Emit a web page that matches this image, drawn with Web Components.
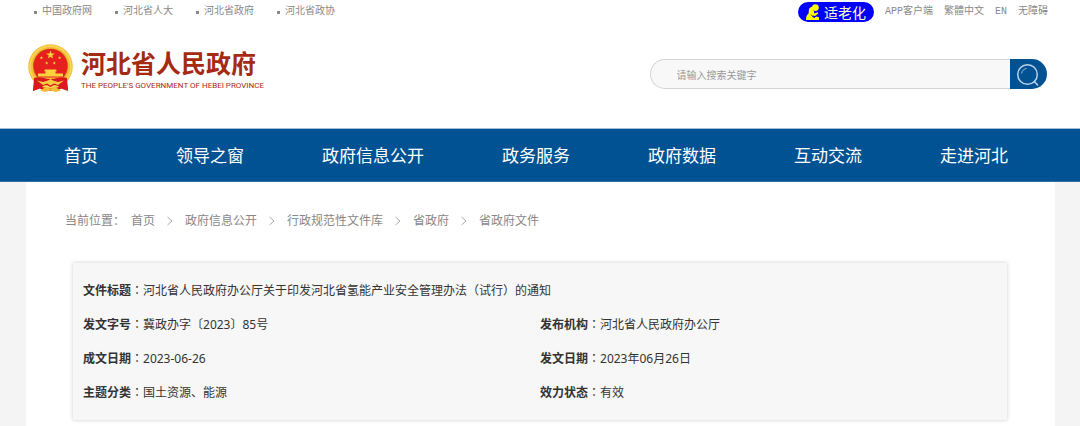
<!DOCTYPE html>
<html lang="zh-CN">
<head>
<meta charset="utf-8">
<meta name="viewport" content="width=device-width, initial-scale=1">
<title>河北省人民政府</title>
<style>
    body {
        margin: 0;
        min-height: 100vh;
        display: flex;
        flex-direction: column;
        background: #f4f4f4;
        color: #333;
        font-family: "Noto Sans", "Noto Sans CJK SC", sans-serif;
        font-size: 12px;
    }
</style>
</head>
<body>
<site-header>
    <top-link slot="links" href="#">中国政府网</top-link>
    <top-link slot="links" href="#">河北省人大</top-link>
    <top-link slot="links" href="#">河北省政府</top-link>
    <top-link slot="links" href="#">河北省政协</top-link>
    <elder-button slot="tools">适老化</elder-button>
    <top-link slot="tools" plain href="#">APP客户端</top-link>
    <top-link slot="tools" plain href="#">繁體中文</top-link>
    <top-link slot="tools" plain href="#">EN</top-link>
    <top-link slot="tools" plain href="#">无障碍</top-link>
    <site-logo slot="logo"></site-logo>
    <search-box slot="search" placeholder="请输入搜索关键字"></search-box>
</site-header>
<main-nav>
    <nav-item href="#">首页</nav-item>
    <nav-item href="#">领导之窗</nav-item>
    <nav-item href="#">政府信息公开</nav-item>
    <nav-item href="#">政务服务</nav-item>
    <nav-item href="#">政府数据</nav-item>
    <nav-item href="#">互动交流</nav-item>
    <nav-item href="#">走进河北</nav-item>
</main-nav>
<page-content>
    <bread-crumb>
        <span slot="label">当前位置：</span>
        <crumb-item href="#">首页</crumb-item>
        <crumb-item href="#">政府信息公开</crumb-item>
        <crumb-item href="#">行政规范性文件库</crumb-item>
        <crumb-item href="#">省政府</crumb-item>
        <crumb-item href="#" last>省政府文件</crumb-item>
    </bread-crumb>
    <doc-info>
        <doc-field wide label="文件标题">河北省人民政府办公厅关于印发河北省氢能产业安全管理办法（试行）的通知</doc-field>
        <doc-field label="发文字号">冀政办字〔2023〕85号</doc-field>
        <doc-field label="发布机构">河北省人民政府办公厅</doc-field>
        <doc-field label="成文日期">2023-06-26</doc-field>
        <doc-field label="发文日期">2023年06月26日</doc-field>
        <doc-field label="主题分类">国土资源、能源</doc-field>
        <doc-field label="效力状态">有效</doc-field>
    </doc-info>
</page-content>

<script>
// shared base: every element renders its markup once into an open shadow root
class BaseElement extends HTMLElement {
    constructor() {
        super();
        this.attachShadow({ mode: "open" });
        this.shadowRoot.innerHTML = this.render();
    }
}

class SiteHeader extends BaseElement {
    render() {
        return `
            <style>
                :host { display: block; background: #fff; }
                .top {
                    display: flex;
                    justify-content: space-between;
                    height: 24px;
                    padding: 0 32px 0 34px;
                }
                .links, .tools { display: flex; align-items: center; }
                .links { gap: 23px; }
                .tools { gap: 11px; }
                .main {
                    display: flex;
                    justify-content: space-between;
                    align-items: center;
                    height: 104px;
                    padding: 0 33px 16px 28px;
                    box-sizing: border-box;
                }
            </style>
            <header>
                <div class="top">
                    <div class="links"><slot name="links"></slot></div>
                    <div class="tools"><slot name="tools"></slot></div>
                </div>
                <div class="main">
                    <slot name="logo"></slot>
                    <slot name="search"></slot>
                </div>
            </header>
        `;
    }
}

class TopLink extends BaseElement {
    render() {
        return `
            <style>
                :host { display: block; line-height: 20px; font-size: 10px; }
                a {
                    display: flex;
                    align-items: center;
                    gap: 5px;
                    color: #888;
                    text-decoration: none;
                    white-space: nowrap;
                    font-family: "Liberation Mono", "Noto Sans CJK SC", monospace;
                }
                a::before { content: ""; width: 3px; height: 3px; background: #888; }
                :host([plain]) a::before { display: none; }
            </style>
            <a><slot></slot></a>
        `;
    }

    connectedCallback() {
        this.shadowRoot.querySelector("a").href = this.getAttribute("href");
    }
}

class ElderButton extends BaseElement {
    render() {
        return `
            <style>
                :host { display: block; }
                button {
                    display: flex;
                    align-items: center;
                    gap: 4px;
                    height: 20px;
                    padding: 0 8px;
                    border: 0;
                    border-radius: 10px;
                    background: #00f;
                    color: #ffffc8;
                    font: 14px/20px "Noto Sans CJK SC", sans-serif;
                    white-space: nowrap;
                }
                svg { display: block; }
            </style>
            <button type="button">
                <svg width="14" height="16" viewBox="0 0 14 16" fill="#ff0" aria-hidden="true">
                    <circle cx="9.4" cy="3.6" r="3.4"/>
                    <path d="M6.2 2.4C4 3 2.8 4.6 2.8 6.8L2.6 9.4C.8 10.8 0 12.6 0 16H13V13.2L10 12.4 8.6 14 6.4 12.6 7 11.4 9 12 12.4 9.6 11.6 8.2 8.4 9.6 7.6 6.4Z"/>
                    <path d="M5.2 10.6 6.6 12.6 9 13.2" fill="none" stroke="#00f" stroke-width=".8"/>
                </svg>
                <slot></slot>
            </button>
        `;
    }
}

class SiteLogo extends BaseElement {
    render() {
        return `
            <style>
                :host { display: block; }
                a {
                    display: flex;
                    align-items: center;
                    gap: 8px;
                    color: #a52a12;
                    text-decoration: none;
                    white-space: nowrap;
                }
                svg { display: block; }
                .name { display: flex; flex-direction: column; }
                .zh { font: bold 25px/36px "Noto Sans CJK SC", sans-serif; }
                .en { font: 8px/12px Roboto, sans-serif; }
            </style>
            <a href="#">
                <svg width="45" height="49" viewBox="0 0 45 49" aria-hidden="true">
                    <path d="M7 33 38 33 40 46 34 44 29 47H16L11 44 5 47Z" fill="#d3161b"/>
                    <circle cx="22.5" cy="22.5" r="22.3" fill="#f3bd35"/>
                    <circle cx="22.5" cy="22.5" r="20.4" fill="none" stroke="#fbd55a" stroke-width="1.6"/>
                    <circle cx="22.5" cy="22" r="17.6" fill="#c98418"/>
                    <circle cx="22.5" cy="22" r="17" fill="#e6201f"/>
                    <g fill="#fbd33c">
                        <path id="star" d="M22.5 6.5 23.5 9.6H26.8L24.2 11.5 25.2 14.6 22.5 12.7 19.8 14.6 20.8 11.5 18.2 9.6H21.5Z"/>
                        <use href="#star" transform="translate(4.4 9.3) scale(.4)"/>
                        <use href="#star" transform="translate(22.6 9.3) scale(.4)"/>
                        <use href="#star" transform="translate(9.7 14.6) scale(.4)"/>
                        <use href="#star" transform="translate(17.3 14.6) scale(.4)"/>
                        <path d="M17 25.5H28L29 27.3H27.5V29.6H35V32.6H10V29.6H17.5V27.3H16Z"/>
                        <path d="M9 33.5H36L31 38H14Z" fill="#f6c43e"/>
                    </g>
                    <path d="M6 34C12 32 16 35 22.5 35S33 32 39 34L40 47 33 44.5C31 42 28 41 26 41L22.5 43 19 41C17 41 14 42 12 44.5L5 47Z" fill="#d8191d"/>
                    <path d="M9 36.5 15 38 20 36.5 22.5 35 25 36.5 30 38 36 36.5 30 41 26 39.5 22.5 41.5 19 39.5 15 41Z" fill="#f8cd42"/>
                    <path d="M12 46.5 18 43 22.5 45 27 43 33 46.5 28 48 22.5 46.5 17 48Z" fill="#f3bd35"/>
                </svg>
                <span class="name">
                    <span class="zh">河北省人民政府</span>
                    <span class="en">THE PEOPLE'S GOVERNMENT OF HEBEI PROVINCE</span>
                </span>
            </a>
        `;
    }
}

class SearchBox extends BaseElement {
    render() {
        return `
            <style>
                :host { display: block; width: 39%; }
                form { display: flex; height: 30px; margin: 0; padding-top: 12px; }
                input {
                    flex: 1;
                    min-width: 0;
                    padding: 0 26px;
                    border: 1px solid #d4d4d4;
                    border-right: 0;
                    border-radius: 15px 0 0 15px;
                    background: #f8f8f8;
                    color: #333;
                    font: 10px "Noto Sans CJK SC", sans-serif;
                    outline: 0;
                }
                input::placeholder { color: #999; }
                button {
                    width: 37px;
                    padding: 0;
                    border: 0;
                    border-radius: 0 15px 15px 0;
                    background: #005293;
                }
                svg { display: block; margin: 1px 0 0 6px; }
            </style>
            <form role="search">
                <input type="text" aria-label="搜索">
                <button type="button" aria-label="搜索">
                    <svg width="24" height="24" viewBox="0 0 24 24" fill="none" stroke="#b9d2e8" aria-hidden="true">
                        <circle cx="11.5" cy="11.5" r="9.8" stroke-width="1.5"/>
                        <path d="M5.5 10.5C6 7.8 7.8 6 10.5 5.5" stroke-width=".8"/>
                        <path d="M17.5 19.5 18.5 18.5 22 22.5" stroke-width="1.5"/>
                    </svg>
                </button>
            </form>
        `;
    }

    connectedCallback() {
        this.shadowRoot.querySelector("input").placeholder = this.getAttribute("placeholder");
    }
}

class MainNav extends BaseElement {
    render() {
        return `
            <style>
                :host { display: block; background: #005293; }
                nav {
                    display: flex;
                    justify-content: space-between;
                    padding: 0 72px 0 64px;
                    border-top: 1px solid #9fbfd8;
                    border-bottom: 1px solid #2f70a6;
                }
            </style>
            <nav><slot></slot></nav>
        `;
    }
}

class NavItem extends BaseElement {
    render() {
        return `
            <style>
                :host { display: block; }
                a {
                    display: block;
                    color: #fff;
                    font: 17px/52px "Noto Sans CJK SC", sans-serif;
                    text-decoration: none;
                    white-space: nowrap;
                }
            </style>
            <a><slot></slot></a>
        `;
    }

    connectedCallback() {
        this.shadowRoot.querySelector("a").href = this.getAttribute("href");
    }
}

class PageContent extends BaseElement {
    render() {
        return `
            <style>
                :host {
                    display: block;
                    flex: 1;
                    margin: 0 25px 0 26px;
                    padding: 29px 48px 5px 39px;
                    background: #fff;
                }
            </style>
            <main><slot></slot></main>
        `;
    }
}

class BreadCrumb extends BaseElement {
    render() {
        return `
            <style>
                :host { display: block; margin-bottom: 32px; color: #888; line-height: 20px; }
                nav { display: flex; align-items: center; }
                ::slotted([slot="label"]) { margin-right: 6px; }
            </style>
            <nav aria-label="当前位置">
                <slot name="label"></slot>
                <slot></slot>
            </nav>
        `;
    }
}

class CrumbItem extends BaseElement {
    render() {
        return `
            <style>
                :host { display: flex; align-items: center; white-space: nowrap; }
                a { color: inherit; text-decoration: none; }
                svg { display: block; margin: 0 12px; }
                :host([last]) svg { display: none; }
            </style>
            <a><slot></slot></a>
            <svg width="6" height="10" viewBox="0 0 6 10" fill="none" stroke="#aaa" aria-hidden="true">
                <path d="M.5 1 5 5 .5 9"/>
            </svg>
        `;
    }

    connectedCallback() {
        this.shadowRoot.querySelector("a").href = this.getAttribute("href");
    }
}

class DocInfo extends BaseElement {
    render() {
        return `
            <style>
                :host {
                    display: block;
                    margin-left: 8px;
                    padding: 10px 10px 11px;
                    background: #f7f7f7;
                    box-shadow: 0 0 4px rgba(0, 0, 0, .2);
                }
                div { display: grid; grid-template-columns: 1fr 1fr; }
                ::slotted([wide]) { grid-column: 1 / -1; }
            </style>
            <div><slot></slot></div>
        `;
    }
}

class DocField extends BaseElement {
    render() {
        return `
            <style>
                :host { display: block; }
                dl { display: flex; align-items: baseline; height: 34px; margin: 0; line-height: 34px; }
                dt { font-family: "Noto Sans CJK SC", sans-serif; font-weight: bold; white-space: nowrap; }
                /* the TC face centres the full-width punctuation */
                .colon { font-family: "Noto Sans CJK TC", sans-serif; font-weight: normal; }
                dd { margin: 0; font-family: "Noto Sans", "Noto Sans CJK SC", sans-serif; }
            </style>
            <dl>
                <dt><span class="label"></span><span class="colon" lang="zh-TW">：</span></dt>
                <dd><slot></slot></dd>
            </dl>
        `;
    }

    connectedCallback() {
        this.shadowRoot.querySelector(".label").textContent = this.getAttribute("label");
    }
}

customElements.define("site-header", SiteHeader);
customElements.define("top-link", TopLink);
customElements.define("elder-button", ElderButton);
customElements.define("site-logo", SiteLogo);
customElements.define("search-box", SearchBox);
customElements.define("main-nav", MainNav);
customElements.define("nav-item", NavItem);
customElements.define("page-content", PageContent);
customElements.define("bread-crumb", BreadCrumb);
customElements.define("crumb-item", CrumbItem);
customElements.define("doc-info", DocInfo);
customElements.define("doc-field", DocField);
</script>
</body>
</html>
